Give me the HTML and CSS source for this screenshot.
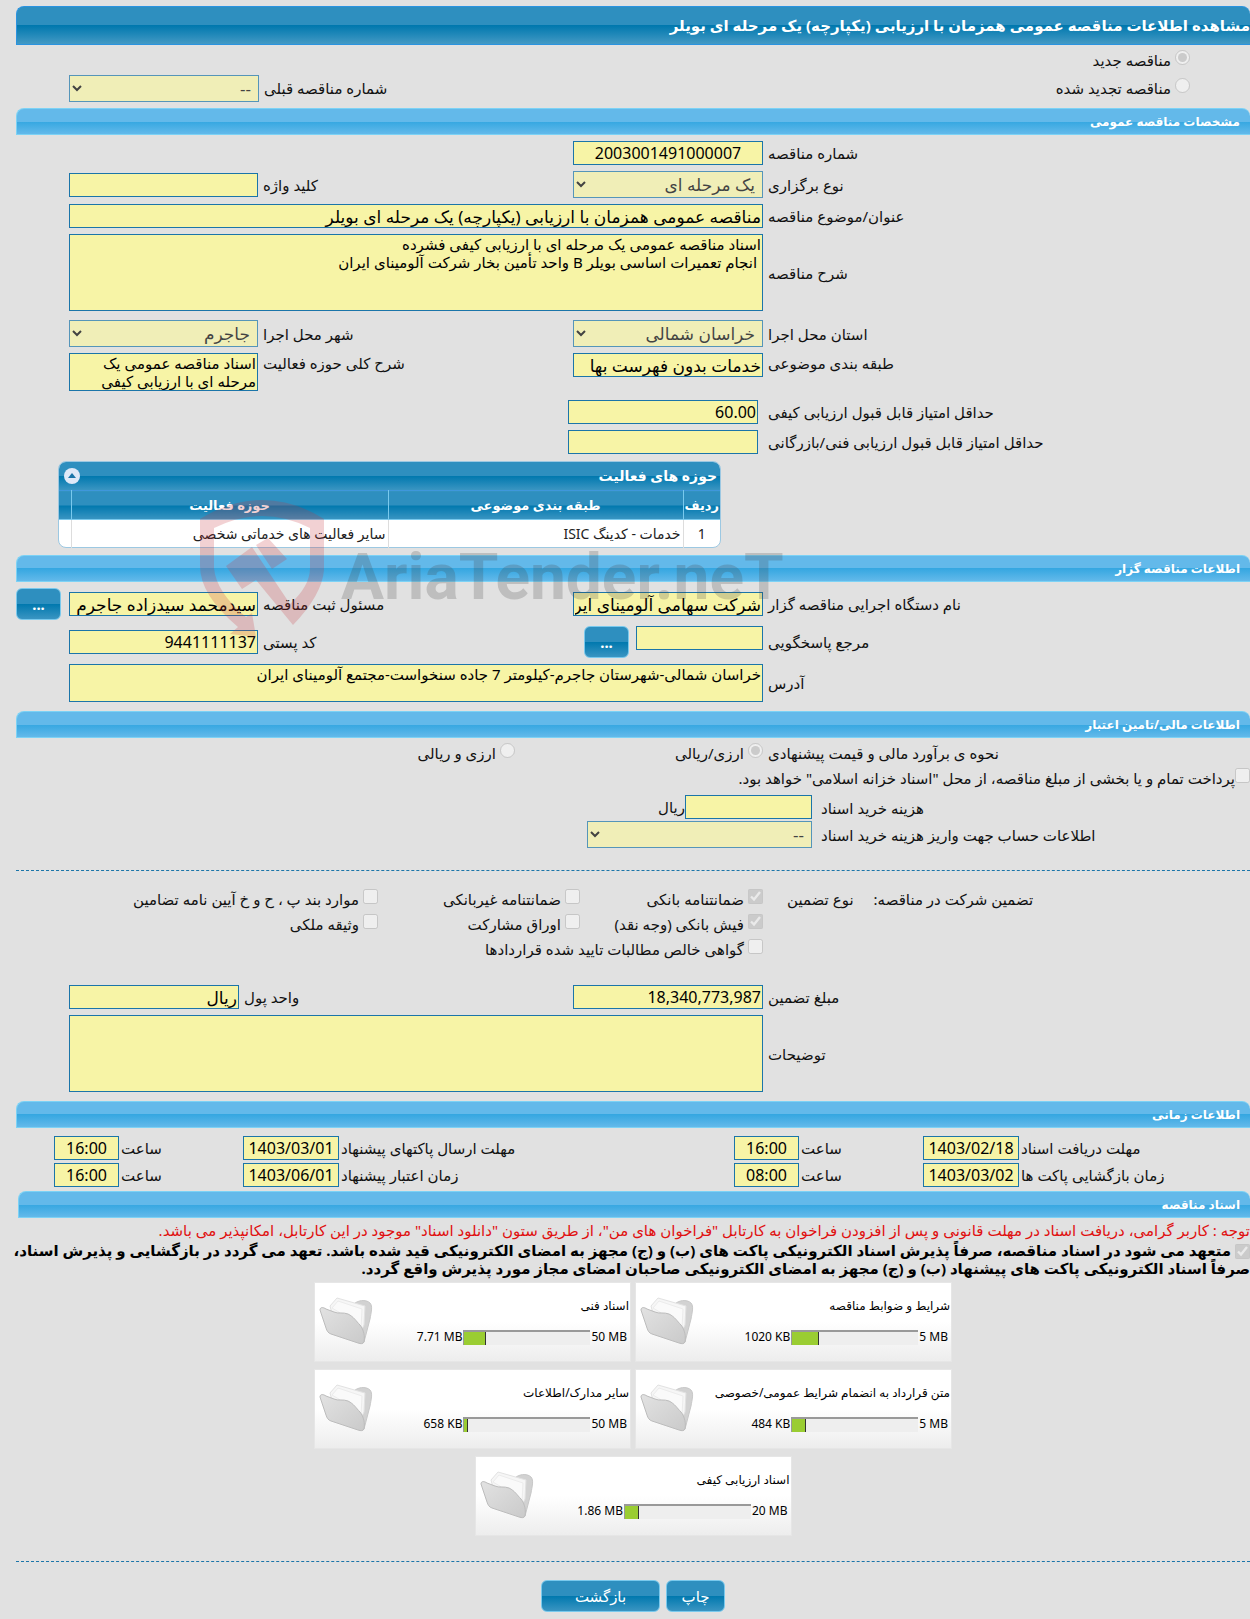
FILE: index.html
```
<!DOCTYPE html>
<html lang="fa" dir="rtl">
<head>
  <meta charset="UTF-8">
  <meta name="viewport" content="width=device-width, initial-scale=1.0">
  <title>مشاهده اطلاعات مناقصه</title>
  <link rel="stylesheet" href="styles.css">
</head>
<body>

  <!-- Shared folder icon -->
  <svg class="symbols" width="0" height="0" aria-hidden="true">
    <defs>
      <linearGradient id="front" x1="0" y1="0" x2="1" y2="1">
        <stop offset="0" stop-color="#e2e2e2"/>
        <stop offset="1" stop-color="#cacaca"/>
      </linearGradient>
    </defs>
    <symbol id="folder" viewBox="0 0 54 48">
      <path d="M34 8 C38 3 47 2 51 6 C54 9 52 16 51 22 L45 45 L30 38 Z" fill="#d2d2d2" stroke="#c8c8c8"/>
      <path d="M11 9 L18 1 L46 9 L45 28 L41 36 L14 20 Z" fill="#f6f6f6" stroke="#e2e2e2"/>
      <path d="M13 11 L19 4 L43 12 L42 32 L38 26 Z" fill="#fafafa" stroke="#ececec"/>
      <path d="M1 13 C1 10 4 10 7 12 L15 15 C19 17 24 15 29 17 C35 20 37 24 41 28 C45 33 46 40 45 45 C44 47 42 47 39 46 L12 37 C9 36 8 34 7 31 Z" fill="url(#front)" stroke="#bcbcbc"/>
    </symbol>
  </svg>

  <div class="page">
    <h1 class="title-bar">مشاهده اطلاعات مناقصه عمومی همزمان با ارزیابی (یکپارچه) یک مرحله ای بویلر</h1>

    <div class="kind">
      <label class="choice"><input type="radio" name="kind" checked disabled>مناقصه جدید</label>
      <label class="choice"><input type="radio" name="kind" disabled>مناقصه تجدید شده</label>
      <label class="caption" for="prev">شماره مناقصه قبلی</label>
      <select id="prev" disabled><option>--</option></select>
    </div>

    <h2 class="section-bar">مشخصات مناقصه عمومی</h2>
    <div class="form">
      <div class="row">
        <label class="caption" for="number">شماره مناقصه</label>
        <input class="center" type="text" id="number" value="2003001491000007" readonly>
      </div>
      <div class="row">
        <label class="caption" for="type">نوع برگزاری</label>
        <select id="type" disabled><option>یک مرحله ای</option></select>
        <label class="caption" for="keyword">کلید واژه</label>
        <input type="text" id="keyword" readonly>
      </div>
      <div class="row">
        <label class="caption" for="subject">عنوان/موضوع مناقصه</label>
        <input class="wide strong" type="text" id="subject" value="مناقصه عمومی همزمان با ارزیابی (یکپارچه) یک مرحله ای بویلر" readonly>
      </div>
      <div class="row">
        <label class="caption" for="details">شرح مناقصه</label>
        <textarea class="wide tall" id="details" readonly>اسناد مناقصه عمومی یک مرحله ای با ارزیابی کیفی فشرده
 انجام تعمیرات اساسی بویلر B واحد تأمین بخار شرکت آلومینای ایران</textarea>
      </div>
      <div class="row spaced">
        <label class="caption" for="province">استان محل اجرا</label>
        <select id="province" disabled><option>خراسان شمالی</option></select>
        <label class="caption" for="city">شهر محل اجرا</label>
        <select id="city" disabled><option>جاجرم</option></select>
      </div>
      <div class="row top">
        <label class="caption" for="category">طبقه بندی موضوعی</label>
        <input class="strong" type="text" id="category" value="خدمات بدون فهرست بها" readonly>
        <label class="caption" for="scope">شرح کلی حوزه فعالیت</label>
        <textarea class="short" id="scope" readonly>اسناد مناقصه عمومی یک مرحله ای با ارزیابی کیفی</textarea>
      </div>
      <div class="row score spaced">
        <label class="caption" for="quality">حداقل امتیاز قابل قبول ارزیابی کیفی</label>
        <input type="text" id="quality" value="60.00" readonly>
      </div>
      <div class="row score">
        <label class="caption" for="technical">حداقل امتیاز قابل قبول ارزیابی فنی/بازرگانی</label>
        <input type="text" id="technical" readonly>
      </div>
    </div>

    <div class="grid-box">
      <div class="grid-title">
        <span>حوزه های فعالیت</span>
        <button class="collapse" type="button" aria-label="بستن">
          <svg width="16" height="16" viewBox="0 0 16 16"><circle cx="8" cy="8" r="8" fill="#dfe9f8"/><path d="M4 10 L8 5 L12 10 Z" fill="#1b75a9"/></svg>
        </button>
      </div>
      <table class="grid">
        <thead>
          <tr><th class="col-row">ردیف</th><th class="col-category">طبقه بندی موضوعی</th><th>حوزه فعالیت</th><th class="col-end"></th></tr>
        </thead>
        <tbody>
          <tr><td class="center">1</td><td>خدمات - کدینگ ISIC</td><td>سایر فعالیت های خدماتی شخصی</td><td></td></tr>
        </tbody>
      </table>
      <div class="watermark" aria-hidden="true">
        <svg width="125" height="138" viewBox="0 0 125 138">
          <path d="M0 19 Q30 0 62 0 Q94 0 124 19 V70 Q122 95 93 125 L56 80 L42 89 L26 66 L52 47 L90 104 Q110 86 110 68 V28 Q62 4 14 28 V68 Q16 92 46 117 L52 113 L56 137 L30 134 L38 127 Q0 95 0 66 Z M56 45 L68 38 L87 59 L72 69 Z"/>
        </svg>
        <span>AriaTender.neT</span>
      </div>
    </div>

    <h2 class="section-bar">اطلاعات مناقصه گزار</h2>
    <div class="form owner">
      <div class="row">
        <label class="caption" for="agency">نام دستگاه اجرایی مناقصه گزار</label>
        <input class="strong" type="text" id="agency" value="شرکت سهامی آلومینای ایران" readonly>
        <label class="caption" for="registrar">مسئول ثبت مناقصه</label>
        <input class="strong" type="text" id="registrar" value="سیدمحمد سیدزاده جاجرم" readonly>
        <button class="btn more" type="button">...</button>
      </div>
      <div class="row">
        <label class="caption" for="contact">مرجع پاسخگویی</label>
        <div class="picker">
          <input type="text" id="contact" readonly>
          <button class="btn more" type="button">...</button>
        </div>
        <label class="caption" for="postcode">کد پستی</label>
        <input type="text" id="postcode" value="9441111137" readonly>
      </div>
      <div class="row">
        <label class="caption" for="address">آدرس</label>
        <textarea class="wide short" id="address" readonly>خراسان شمالی-شهرستان جاجرم-کیلومتر 7 جاده سنخواست-مجتمع آلومینای ایران</textarea>
      </div>
    </div>

    <h2 class="section-bar">اطلاعات مالی/تامین اعتبار</h2>
    <div class="finance">
      <div class="estimate">
        <span class="caption">نحوه ی برآورد مالی و قیمت پیشنهادی</span>
        <label class="choice"><input type="radio" name="estimate" checked disabled>ارزی/ریالی</label>
        <label class="choice"><input type="radio" name="estimate" disabled>ارزی و ریالی</label>
      </div>
      <label class="choice treasury"><input type="checkbox" disabled>پرداخت تمام و یا بخشی از مبلغ مناقصه، از محل "اسناد خزانه اسلامی" خواهد بود.</label>
      <div class="cost">
        <label class="caption" for="fee">هزینه خرید اسناد</label>
        <div class="money">
          <input type="text" id="fee" readonly>
          <span>ریال</span>
        </div>
      </div>
      <div class="cost">
        <label class="caption" for="account">اطلاعات حساب جهت واریز هزینه خرید اسناد</label>
        <select id="account" disabled><option>--</option></select>
      </div>
    </div>

    <hr>

    <div class="guarantee">
      <div class="guarantee-title">
        <span>تضمین شرکت در مناقصه:</span>
        <span>نوع تضمین</span>
      </div>
      <div class="options">
        <label class="choice"><input type="checkbox" checked disabled>ضمانتنامه بانکی</label>
        <label class="choice"><input type="checkbox" disabled>ضمانتنامه غیربانکی</label>
        <label class="choice"><input type="checkbox" disabled>موارد بند پ ، ح و خ آیین نامه تضامین</label>
        <label class="choice"><input type="checkbox" checked disabled>فیش بانکی (وجه نقد)</label>
        <label class="choice"><input type="checkbox" disabled>اوراق مشارکت</label>
        <label class="choice"><input type="checkbox" disabled>وثیقه ملکی</label>
        <label class="choice full"><input type="checkbox" disabled>گواهی خالص مطالبات تایید شده قراردادها</label>
      </div>
    </div>

    <div class="form amount">
      <div class="row currency">
        <label class="caption" for="amount">مبلغ تضمین</label>
        <input type="text" id="amount" value="18,340,773,987" readonly>
        <label class="caption" for="currency">واحد پول</label>
        <input class="strong" type="text" id="currency" value="ریال" readonly>
      </div>
      <div class="row">
        <label class="caption" for="notes">توضیحات</label>
        <textarea class="wide tall" id="notes" readonly></textarea>
      </div>
    </div>

    <h2 class="section-bar">اطلاعات زمانی</h2>
    <div class="times">
      <label class="caption" for="d1">مهلت دریافت اسناد</label>
      <input class="center" type="text" id="d1" value="1403/02/18" readonly>
      <label class="caption" for="t1">ساعت</label>
      <input class="center" type="text" id="t1" value="16:00" readonly>
      <label class="caption" for="d2">مهلت ارسال پاکتهای پیشنهاد</label>
      <input class="center" type="text" id="d2" value="1403/03/01" readonly>
      <label class="caption" for="t2">ساعت</label>
      <input class="center" type="text" id="t2" value="16:00" readonly>
    </div>
    <div class="times">
      <label class="caption" for="d3">زمان بازگشایی پاکت ها</label>
      <input class="center" type="text" id="d3" value="1403/03/02" readonly>
      <label class="caption" for="t3">ساعت</label>
      <input class="center" type="text" id="t3" value="08:00" readonly>
      <label class="caption" for="d4">زمان اعتبار پیشنهاد</label>
      <input class="center" type="text" id="d4" value="1403/06/01" readonly>
      <label class="caption" for="t4">ساعت</label>
      <input class="center" type="text" id="t4" value="16:00" readonly>
    </div>

    <h2 class="section-bar documents">اسناد مناقصه</h2>
    <p class="notice">توجه : کاربر گرامی، دریافت اسناد در مهلت قانونی و پس از افزودن فراخوان به کارتابل "فراخوان های من"، از طریق ستون "دانلود اسناد" موجود در این کارتابل، امکانپذیر می باشد.</p>
    <label class="pledge"><input type="checkbox" checked disabled> متعهد می شود در اسناد مناقصه، صرفاً پذیرش اسناد الکترونیکی پاکت های (ب) و (ج) مجهز به امضای الکترونیکی قید شده باشد. تعهد می گردد در بازگشایی و پذیرش اسناد،<br>صرفاً اسناد الکترونیکی پاکت های پیشنهاد (ب) و (ج) مجهز به امضای الکترونیکی صاحبان امضای مجاز مورد پذیرش واقع گردد.</label>

    <div class="files">
      <div class="file">
        <span>شرایط و ضوابط مناقصه</span>
        <svg class="folder"><use href="#folder"/></svg>
        <div class="usage"><span dir="ltr">5 MB</span><div class="bar"><div class="fill" style="width: 21%"></div></div><span dir="ltr">1020 KB</span></div>
      </div>
      <div class="file">
        <span>اسناد فنی</span>
        <svg class="folder"><use href="#folder"/></svg>
        <div class="usage"><span dir="ltr">50 MB</span><div class="bar"><div class="fill" style="width: 17%"></div></div><span dir="ltr">7.71 MB</span></div>
      </div>
      <div class="file">
        <span>متن قرارداد به انضمام شرایط عمومی/خصوصی</span>
        <svg class="folder"><use href="#folder"/></svg>
        <div class="usage"><span dir="ltr">5 MB</span><div class="bar"><div class="fill" style="width: 11%"></div></div><span dir="ltr">484 KB</span></div>
      </div>
      <div class="file">
        <span>سایر مدارک/اطلاعات</span>
        <svg class="folder"><use href="#folder"/></svg>
        <div class="usage"><span dir="ltr">50 MB</span><div class="bar"><div class="fill" style="width: 3%"></div></div><span dir="ltr">658 KB</span></div>
      </div>
      <div class="file">
        <span>اسناد ارزیابی کیفی</span>
        <svg class="folder"><use href="#folder"/></svg>
        <div class="usage"><span dir="ltr">20 MB</span><div class="bar"><div class="fill" style="width: 11%"></div></div><span dir="ltr">1.86 MB</span></div>
      </div>
    </div>

    <hr>

    <div class="actions">
      <button class="btn print" type="button">چاپ</button>
      <button class="btn back" type="button">بازگشت</button>
    </div>
  </div>

</body>
</html>
```

FILE: styles.css
```
/* General Styles */
* {
  box-sizing: border-box;
}

body {
  margin: 0;
  background: #e1e1e1;
  color: #111;
  font-family: Tahoma, "Noto Sans", "DejaVu Sans", sans-serif;
  font-size: 15px;
  line-height: 20px;
}

.symbols {
  position: absolute;
}

.page {
  padding: 6px 0 7px 16px;
}

/* Header bars */
.title-bar,
.section-bar {
  margin: 0;
  border: 1px solid #7cd2f5;
  border-right: none;
  border-radius: 8px 8px 0 0;
  color: #fff;
  font-weight: bold;
  white-space: nowrap;
}

.title-bar {
  height: 39px;
  font-size: 15px;
  line-height: 37px;
  border-color: #2a93e0;
  background: linear-gradient(#2e8fbf 50%, #0078ae 50%, #4399c4);
}

.section-bar {
  height: 27px;
  padding-right: 10px;
  font-size: 12px;
  line-height: 25px;
  background: linear-gradient(#63b9ea 50%, #35a7e1 50%, #63b9ea);
}

/* Controls */
input,
select,
textarea,
button {
  margin: 0;
  font-family: inherit;
}

input[type="text"],
textarea,
select {
  width: 100%;
  border: 1px solid #1b75a9;
  border-radius: 0;
  outline: none;
  background-color: #f7f4a6;
  color: #000;
}

input[type="text"] {
  height: 24px;
  padding: 0 1px;
  font-size: 16px;
}

input[type="text"].center {
  text-align: center;
}

input[type="text"].strong {
  font-size: 17px;
}

textarea {
  display: block;
  padding: 0 1px;
  resize: none;
  overflow: hidden;
  font-size: 15px;
  line-height: 18px;
}

select {
  height: 27px;
  padding: 0 3px;
  font-size: 17px;
}

input[type="radio"],
input[type="checkbox"] {
  flex: none;
  width: 15px;
  height: 15px;
}

.choice {
  display: flex;
  gap: 4px;
  white-space: nowrap;
}

.caption {
  padding-left: 5px;
  text-align: left;
  white-space: nowrap;
}

hr {
  margin: 0;
  border: none;
  border-top: 1px dashed #1b75a9;
}

.btn {
  height: 32px;
  padding: 0;
  border: 1px solid #79c9ed;
  border-radius: 6px;
  background: linear-gradient(#2e8fbf 50%, #0078ae 50%, #3a95c2);
  color: #fff;
  font-size: 15px;
}

.btn.more {
  flex: none;
  width: 45px;
  font-weight: bold;
}

/* Form rows */
.kind {
  display: grid;
  grid-template-columns: 1fr 314px 190px 53px;
  grid-template-rows: 28px 28px;
  align-items: center;
  padding: 1px 0 6px;
}

.kind .choice {
  grid-column: 1;
  padding-right: 60px;
}

.kind .caption {
  grid-area: 2 / 2;
}

.form {
  display: flex;
  flex-direction: column;
  gap: 6px;
  padding: 6px 0 7px;
}

.row {
  display: grid;
  grid-template-columns: 1fr 190px 315px 189px 53px;
  align-items: center;
}

.row .wide {
  grid-column: 2 / 5;
}

.row.spaced {
  margin-top: 3px;
}

.row.top {
  align-items: start;
}

.row.score {
  grid-template-columns: 1fr 190px 547px;
  column-gap: 5px;
}

.row.currency {
  grid-template-columns: 1fr 190px 334px 170px 53px;
}

.row .btn.more {
  justify-self: end;
}

.tall {
  height: 77px;
}

.short {
  height: 38px;
}

.owner {
  padding-bottom: 9px;
}

.amount {
  padding: 23px 0 9px;
}

.picker {
  display: flex;
  gap: 7px;
}

.picker input[type="text"] {
  width: 127px;
}

/* Activity table */
.grid-box {
  position: relative;
  width: 663px;
  height: 87px;
  margin: 0 auto 7px 42px;
  border: 1px solid #9cc8e2;
  border-radius: 8px;
  background: #fff;
}

.grid-title {
  display: flex;
  align-items: center;
  justify-content: space-between;
  height: 28px;
  padding: 0 3px 0 5px;
  border-radius: 7px 7px 0 0;
  background: linear-gradient(#2e8fbf 50%, #0078ae 50%, #3a95c2);
  color: #fff;
  font-size: 14px;
  font-weight: bold;
}

.collapse {
  width: 16px;
  height: 16px;
  padding: 0;
  border: none;
  background: none;
}

.collapse svg {
  display: block;
}

.grid {
  width: 100%;
  border-collapse: collapse;
  table-layout: fixed;
  font-size: 14px;
}

.grid th {
  height: 29px;
  padding: 0;
  border-top: 1px solid #3f97dc;
  border-bottom: 1px solid #79c9ed;
  border-left: 1px solid #79c9ed;
  background: linear-gradient(#2e8fbf 50%, #0078ae 50%, #3a95c2);
  color: #fff;
  font-size: 13px;
}

.grid td {
  height: 28px;
  padding: 0 2px;
  border-left: 1px solid #ddd;
  color: #222;
}

.grid td.center {
  text-align: center;
}

.grid th:last-child,
.grid td:last-child {
  border-left: none;
}

.col-row {
  width: 37px;
}

.col-category {
  width: 295px;
}

.col-end {
  width: 12px;
}

.watermark {
  position: absolute;
  top: 38px;
  left: 141px;
  z-index: 1;
  display: flex;
  gap: 16px;
  direction: ltr;
  opacity: 0.22;
  pointer-events: none;
}

.watermark path {
  fill: #c8323c;
}

.watermark span {
  color: #444;
  font-family: Roboto, sans-serif;
  font-size: 64px;
  font-weight: bold;
  line-height: 156px;
  height: 138px;
}

/* Financial section */
.finance {
  padding: 5px 0 22px;
}

.estimate {
  display: grid;
  grid-template-columns: 1fr 248px 499px;
  padding-right: 1px;
}

.treasury {
  gap: 0;
  padding: 5px 0 7px;
}

.cost {
  display: grid;
  grid-template-columns: 1fr 225px 571px;
  align-items: center;
}

.cost .caption {
  padding-left: 9px;
}

.money {
  display: flex;
  align-items: center;
  padding-bottom: 2px;
}

.money input[type="text"] {
  width: 127px;
}

.guarantee {
  display: grid;
  grid-template-columns: 1fr 747px;
  padding-top: 16px;
  line-height: 25px;
}

.guarantee-title {
  display: flex;
  justify-content: flex-end;
  gap: 20px;
  padding-left: 24px;
}

.options {
  display: grid;
  grid-template-columns: 183px 202px 1fr;
}

.options .full {
  grid-column: 1 / 4;
}

.options input {
  margin-top: 2px;
}

/* Dates */
.times {
  display: grid;
  grid-template-columns: 1fr 96px 124px 65px 395px 96px 124px 65px 38px;
  align-items: center;
  padding-top: 3px;
}

.section-bar + .times {
  padding-top: 8px;
}

.times .caption {
  padding-left: 2px;
}

.documents {
  margin: 4px 0 0 2px;
}

/* Documents */
.notice {
  margin: 2px 0 1px;
  color: #e01010;
  white-space: nowrap;
}

.pledge {
  display: block;
  margin-bottom: 5px;
  color: #000;
  font-weight: bold;
  line-height: 18px;
  white-space: nowrap;
}

.pledge input[type="checkbox"] {
  vertical-align: middle;
}

.files {
  display: flex;
  flex-wrap: wrap;
  justify-content: center;
  gap: 7px 4px;
  max-width: 700px;
  margin: 0 auto;
  padding-bottom: 25px;
}

.file {
  display: grid;
  grid-template-columns: 1fr 54px;
  grid-template-rows: 18px 18px;
  row-gap: 13px;
  width: 317px;
  height: 80px;
  padding: 14px 1px 0 4px;
  border: 1px solid #e6e6e6;
  background: linear-gradient(#fff 50%, #ededed);
  color: #000;
  font-size: 12px;
  line-height: 18px;
}

.folder {
  grid-area: 1 / 2 / 3 / 3;
  width: 54px;
  height: 48px;
}

.usage {
  display: flex;
  align-items: center;
  gap: 1px;
  grid-row: 2;
  padding-right: 2px;
}

.bar {
  width: 127px;
  height: 15px;
  border-top: 2px solid #999;
  border-left: 1px solid #999;
  background: #eee;
  direction: ltr;
}

.fill {
  height: 100%;
  border-right: 1px solid #333;
  background: #9acd32;
}

.actions {
  display: flex;
  justify-content: center;
  gap: 6px;
  padding-top: 18px;
}

.print {
  width: 59px;
}

.back {
  width: 119px;
}
```
